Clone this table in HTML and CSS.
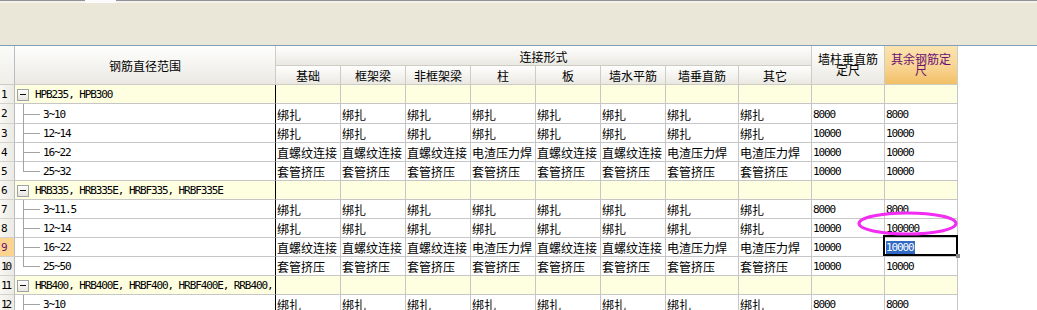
FILE: index.html
```html
<!DOCTYPE html>
<html>
<head>
<meta charset="utf-8">
<link rel="stylesheet" href="styles.css">
</head>
<body>
<div class="tabs"><div class="tab"></div></div>
<div class="toolbar"></div>
<div class="sheet">
  <div class="grid">
    <div class="h h-rn"></div>
    <div class="h h-range">钢筋直径范围</div>
    <div class="h h-conn">连接形式</div>
    <div class="h h-wall">墙柱垂直筋定尺</div>
    <div class="h h-rest">其余钢筋定尺</div>
    <div class="h">基础</div>
    <div class="h">框架梁</div>
    <div class="h">非框架梁</div>
    <div class="h">柱</div>
    <div class="h">板</div>
    <div class="h">墙水平筋</div>
    <div class="h">墙垂直筋</div>
    <div class="h">其它</div>

    <div class="rn">1</div>
    <div class="tree grp"><span class="toggle"></span><span class="m">HPB235, HPB300</span></div>
    <div class="c grp"></div><div class="c grp"></div><div class="c grp"></div><div class="c grp"></div><div class="c grp"></div><div class="c grp"></div><div class="c grp"></div><div class="c grp"></div><div class="c grp"></div><div class="c grp"></div>

    <div class="rn">2</div>
    <div class="tree"><span class="branch"></span><span class="m">3~10</span></div>
    <div class="c">绑扎</div><div class="c">绑扎</div><div class="c">绑扎</div><div class="c">绑扎</div><div class="c">绑扎</div><div class="c">绑扎</div><div class="c">绑扎</div><div class="c">绑扎</div><div class="c m">8000</div><div class="c m">8000</div>

    <div class="rn">3</div>
    <div class="tree"><span class="branch"></span><span class="m">12~14</span></div>
    <div class="c">绑扎</div><div class="c">绑扎</div><div class="c">绑扎</div><div class="c">绑扎</div><div class="c">绑扎</div><div class="c">绑扎</div><div class="c">绑扎</div><div class="c">绑扎</div><div class="c m">10000</div><div class="c m">10000</div>

    <div class="rn">4</div>
    <div class="tree"><span class="branch"></span><span class="m">16~22</span></div>
    <div class="c">直螺纹连接</div><div class="c">直螺纹连接</div><div class="c">直螺纹连接</div><div class="c">电渣压力焊</div><div class="c">直螺纹连接</div><div class="c">直螺纹连接</div><div class="c">电渣压力焊</div><div class="c">电渣压力焊</div><div class="c m">10000</div><div class="c m">10000</div>

    <div class="rn">5</div>
    <div class="tree"><span class="branch last"></span><span class="m">25~32</span></div>
    <div class="c">套管挤压</div><div class="c">套管挤压</div><div class="c">套管挤压</div><div class="c">套管挤压</div><div class="c">套管挤压</div><div class="c">套管挤压</div><div class="c">套管挤压</div><div class="c">套管挤压</div><div class="c m">10000</div><div class="c m">10000</div>

    <div class="rn">6</div>
    <div class="tree grp"><span class="toggle"></span><span class="m">HRB335, HRB335E, HRBF335, HRBF335E</span></div>
    <div class="c grp"></div><div class="c grp"></div><div class="c grp"></div><div class="c grp"></div><div class="c grp"></div><div class="c grp"></div><div class="c grp"></div><div class="c grp"></div><div class="c grp"></div><div class="c grp"></div>

    <div class="rn">7</div>
    <div class="tree"><span class="branch"></span><span class="m">3~11.5</span></div>
    <div class="c">绑扎</div><div class="c">绑扎</div><div class="c">绑扎</div><div class="c">绑扎</div><div class="c">绑扎</div><div class="c">绑扎</div><div class="c">绑扎</div><div class="c">绑扎</div><div class="c m">8000</div><div class="c m">8000</div>

    <div class="rn">8</div>
    <div class="tree"><span class="branch"></span><span class="m">12~14</span></div>
    <div class="c">绑扎</div><div class="c">绑扎</div><div class="c">绑扎</div><div class="c">绑扎</div><div class="c">绑扎</div><div class="c">绑扎</div><div class="c">绑扎</div><div class="c">绑扎</div><div class="c m">10000</div><div class="c m">100000</div>

    <div class="rn cur">9</div>
    <div class="tree"><span class="branch"></span><span class="m">16~22</span></div>
    <div class="c">直螺纹连接</div><div class="c">直螺纹连接</div><div class="c">直螺纹连接</div><div class="c">电渣压力焊</div><div class="c">直螺纹连接</div><div class="c">直螺纹连接</div><div class="c">电渣压力焊</div><div class="c">电渣压力焊</div><div class="c m">10000</div><div class="c m sel"><span class="hl">10000</span></div>

    <div class="rn">10</div>
    <div class="tree"><span class="branch last"></span><span class="m">25~50</span></div>
    <div class="c">套管挤压</div><div class="c">套管挤压</div><div class="c">套管挤压</div><div class="c">套管挤压</div><div class="c">套管挤压</div><div class="c">套管挤压</div><div class="c">套管挤压</div><div class="c">套管挤压</div><div class="c m">10000</div><div class="c m">10000</div>

    <div class="rn">11</div>
    <div class="tree grp"><span class="toggle"></span><span class="m">HRB400, HRB400E, HRBF400, HRBF400E, RRB400,</span></div>
    <div class="c grp"></div><div class="c grp"></div><div class="c grp"></div><div class="c grp"></div><div class="c grp"></div><div class="c grp"></div><div class="c grp"></div><div class="c grp"></div><div class="c grp"></div><div class="c grp"></div>

    <div class="rn">12</div>
    <div class="tree"><span class="branch"></span><span class="m">3~10</span></div>
    <div class="c">绑扎</div><div class="c">绑扎</div><div class="c">绑扎</div><div class="c">绑扎</div><div class="c">绑扎</div><div class="c">绑扎</div><div class="c">绑扎</div><div class="c">绑扎</div><div class="c m">8000</div><div class="c m">8000</div>
  </div>
  <svg class="mark" width="101" height="25" viewBox="0 0 101 25"><ellipse cx="50.5" cy="12.5" rx="48.5" ry="10.5" fill="none" stroke="#f22cf2" stroke-width="3"/></svg>
</div>
</body>
</html>
```
FILE: styles.css
```css
* { box-sizing: border-box; }
html, body { margin: 0; padding: 0; background: #fff; }
body {
  width: 1037px;
  height: 310px;
  overflow: hidden;
  font-family: "Noto Sans CJK SC", sans-serif;
  font-size: 12px;
  color: #000;
}
.tabs {
  height: 3px;
  border-top: 1px solid #8e9397;
  background: #f4f2ea;
  display: flex;
}
.tab {
  margin-left: 85px;
  width: 31px;
  margin-top: -1px;
  background: #fbfbfd;
}
.toolbar {
  height: 43px;
  background: #ebe7d8;
  border-bottom: 1px solid #7f9fb8;
}
.sheet { position: relative; }
.grid {
  display: grid;
  width: 958px;
  grid-template-columns: 15px 261px repeat(6, 65px) repeat(4, 73px);
  grid-template-rows: 20px 19px 19px 20px repeat(10, 19px);
}
.h {
  display: flex;
  align-items: center;
  justify-content: center;
  text-align: center;
  line-height: 11px;
  background: linear-gradient(#fefefd, #f4f3ef 55%, #e9e8e2);
  border-right: 1px solid #cdccc5;
  border-bottom: 1px solid #cdccc5;
  padding-top: 1px;
}
.h-rn { grid-column: 1; grid-row: 1 / span 2; border-right-color: #b9bdc1; background: linear-gradient(#fbfbf9, #efeee8); }
.h-range { grid-column: 2; grid-row: 1 / span 2; }
.h-conn { grid-column: 3 / span 8; grid-row: 1; }
.h-wall { grid-column: 11; grid-row: 1 / span 2; padding: 0 5px 3px; }
.h-rest {
  grid-column: 12; grid-row: 1 / span 2; padding: 0 5px 3px;
  color: #6b0f72;
  background: linear-gradient(#fbe4b0, #f8d492 55%, #f2c066);
}
.m {
  font-family: "DejaVu Sans Mono", monospace;
  font-size: 11px;
  letter-spacing: -1.1px;
}
.rn {
  display: flex;
  align-items: center;
  padding-left: 1px;
  overflow: hidden;
  font-family: "DejaVu Sans Mono", monospace;
  font-size: 11px;
  letter-spacing: -2px;
  background: linear-gradient(to right, #f8f7f3, #ebeae3);
  border-right: 1px solid #b9bdc1;
  border-bottom: 1px solid #d2d1ca;
}
.rn.cur { background: #fbd590; color: #6b0f72; }
.tree {
  display: flex;
  align-items: center;
  padding-left: 8px;
  white-space: nowrap;
  border-right: 1px solid #000;
  border-bottom: 1px solid #c6c6c6;
  padding-top: 1px;
}
.tree.grp { padding-left: 2px; }
.branch {
  align-self: stretch;
  flex: none;
  width: 17px;
  margin: -1px 3px -1px 0;
  background:
    linear-gradient(#a3a3a3, #a3a3a3) left top / 1px 100% no-repeat,
    linear-gradient(#a3a3a3, #a3a3a3) left 50% / 100% 1px no-repeat;
}
.branch.last {
  background:
    linear-gradient(#a3a3a3, #a3a3a3) left top / 1px 50% no-repeat,
    linear-gradient(#a3a3a3, #a3a3a3) left 50% / 100% 1px no-repeat;
}
.toggle {
  flex: none;
  width: 12px;
  height: 12px;
  margin-right: 6px;
  border: 1px solid #9fa3a7;
  background: linear-gradient(#ffffff, #e6e5df);
  display: flex;
  align-items: center;
  justify-content: center;
}
.toggle::before {
  content: "";
  width: 6px;
  height: 1px;
  background: #111;
}
.c {
  display: flex;
  align-items: center;
  padding: 1px 0 0 1px;
  white-space: nowrap;
  overflow: hidden;
  border-right: 1px solid #c6c6c6;
  border-bottom: 1px solid #c6c6c6;
}
.grp { background: #fefee1; }
.c.sel { position: relative; overflow: visible; }
.c.sel::after {
  content: "";
  position: absolute;
  left: -2px;
  top: -3px;
  right: -1px;
  bottom: 0;
  border: 2px solid #000;
}
.c.sel::before {
  content: "";
  position: absolute;
  right: -3px;
  bottom: -2px;
  width: 4px;
  height: 4px;
  background: #8a8a8a;
  z-index: 1;
}
.hl { background: #316ac5; color: #fff; padding-right: 1px; }
.mark {
  position: absolute;
  left: 857px;
  top: 165px;
}
```
